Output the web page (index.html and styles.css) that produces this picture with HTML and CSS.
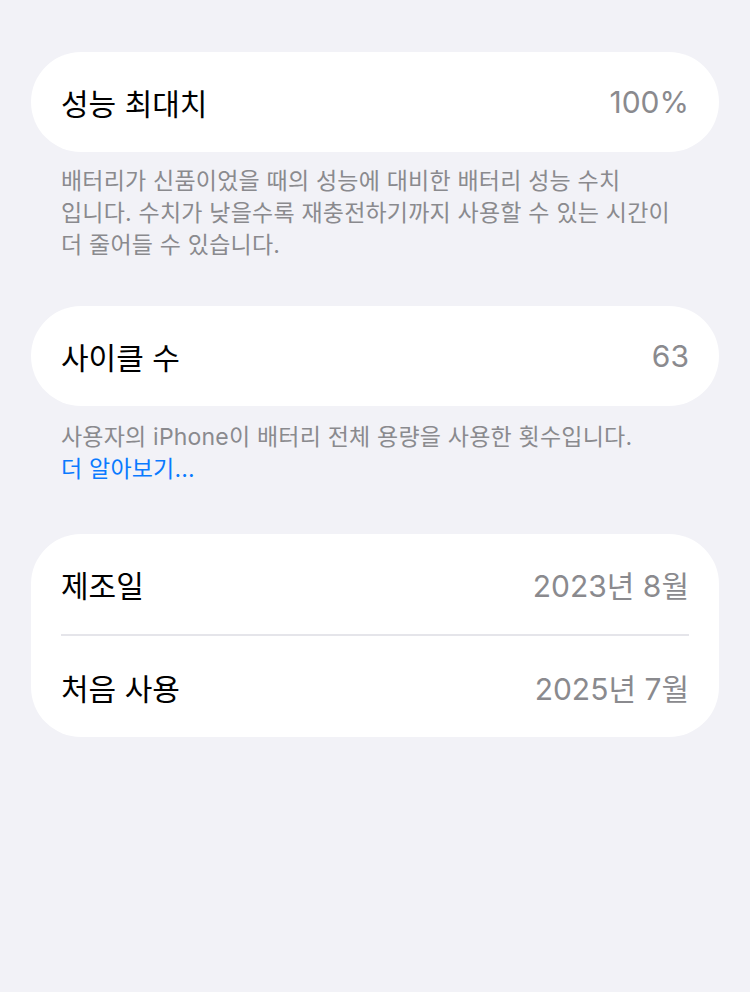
FILE: index.html
```html
<!DOCTYPE html>
<html lang="ko">
<head>
  <meta charset="utf-8">
  <title>배터리 성능 상태</title>
  <link rel="stylesheet" href="styles.css">
</head>
<body>
  <div class="page">
    <div class="group">
      <div class="row">
        <span class="label">성능 최대치</span>
        <span class="value">100%</span>
      </div>
    </div>
    <p class="note">배터리가 신품이었을 때의 성능에 대비한 배터리 성능 수치<br>입니다. 수치가 낮을수록 재충전하기까지 사용할 수 있는 시간이<br>더 줄어들 수 있습니다.</p>

    <div class="group">
      <div class="row">
        <span class="label">사이클 수</span>
        <span class="value">63</span>
      </div>
    </div>
    <p class="note note-link">사용자의 iPhone이 배터리 전체 용량을 사용한 횟수입니다.<br><a href="#" class="more">더 알아보기...</a></p>

    <div class="group">
      <div class="row">
        <span class="label">제조일</span>
        <span class="value">2023년 8월</span>
      </div>
      <div class="row">
        <span class="label">처음 사용</span>
        <span class="value">2025년 7월</span>
      </div>
    </div>
  </div>
</body>
</html>
```

FILE: styles.css
```css
body {
  margin: 0;
  background: #f2f2f7;
  font-family: Inter, "Noto Sans CJK KR", sans-serif;
}

.page {
  padding: 52px 31px 0 31px;
}

.group {
  background: #ffffff;
  border-radius: 50px;
  padding: 0 30px;
}

.row {
  display: flex;
  justify-content: space-between;
  align-items: center;
  height: 100px;
  font-size: 30px;
}
.row + .row {
  border-top: 2px solid #e5e5ea;
  height: 101px;
}

.label {
  color: #000000;
}
.value {
  color: #8a8a8e;
}

.note {
  margin: 13px 0 0 0;
  padding: 0 30px 45px 30px;
  font-size: 23px;
  line-height: 32px;
  letter-spacing: 0.2px;
  color: #8a8a8e;
}
.note-link {
  margin-top: 15px;
  padding-bottom: 49px;
}

.more {
  color: #0a7aff;
  text-decoration: none;
}
```
